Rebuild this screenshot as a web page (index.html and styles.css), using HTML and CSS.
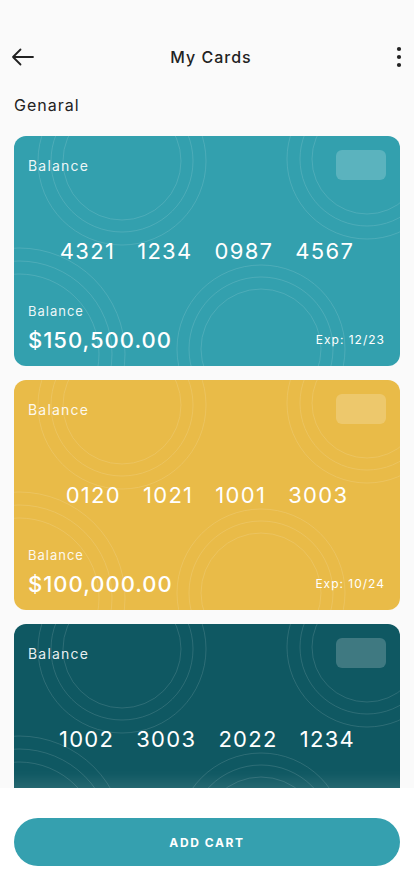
FILE: index.html
```html
<!DOCTYPE html>
<html lang="en">
<head>
  <meta charset="UTF-8" />
  <meta name="viewport" content="width=device-width, initial-scale=1.0"/>
  <title>My Cards</title>
  <link rel="stylesheet" href="styles.css">
</head>
<body>

<!-- Top Bar -->
<div class="topbar">
  <svg class="icon-back" width="24" height="24" viewBox="0 0 24 24">
    <path d="M2 12h20M9.5 4.5L2 12l7.5 7.5" fill="none" stroke="#222" stroke-width="1.8" stroke-linecap="round" stroke-linejoin="round"/>
  </svg>
  <h1>My Cards</h1>
  <svg class="icon-more" width="24" height="24" viewBox="0 0 24 24">
    <circle cx="12" cy="4" r="2.1" fill="#222"/>
    <circle cx="12" cy="12" r="2.1" fill="#222"/>
    <circle cx="12" cy="20" r="2.1" fill="#222"/>
  </svg>
</div>

<div class="section-title">Genaral</div>

<!-- Card List -->
<div class="card-list">

  <div class="card card-teal">
    <svg class="card-bg" viewBox="0 0 386 230" preserveAspectRatio="none">
      <g fill="none" stroke="rgba(255,255,255,0.13)" stroke-width="1">
        <circle cx="108" cy="25" r="59"/><circle cx="108" cy="25" r="71"/><circle cx="108" cy="25" r="84"/>
        <circle cx="353" cy="23" r="55"/><circle cx="353" cy="23" r="67"/><circle cx="353" cy="23" r="80"/>
        <circle cx="247" cy="213" r="60"/><circle cx="247" cy="213" r="72"/><circle cx="247" cy="213" r="84"/>
        <circle cx="5" cy="218" r="80"/><circle cx="5" cy="218" r="93"/><circle cx="5" cy="218" r="106"/>
      </g>
    </svg>
    <div class="card-top">
      <span class="card-label">Balance</span>
      <span class="card-chip"></span>
    </div>
    <div class="card-number">
      <span>4321</span><span>1234</span><span>0987</span><span>4567</span>
    </div>
    <div class="card-bottom">
      <div>
        <div class="card-sublabel">Balance</div>
        <div class="card-amount">$150,500.00</div>
      </div>
      <div class="card-exp">Exp: 12/23</div>
    </div>
  </div>

  <div class="card card-yellow">
    <svg class="card-bg" viewBox="0 0 386 230" preserveAspectRatio="none">
      <g fill="none" stroke="rgba(255,255,255,0.13)" stroke-width="1">
        <circle cx="108" cy="25" r="59"/><circle cx="108" cy="25" r="71"/><circle cx="108" cy="25" r="84"/>
        <circle cx="353" cy="23" r="55"/><circle cx="353" cy="23" r="67"/><circle cx="353" cy="23" r="80"/>
        <circle cx="247" cy="213" r="60"/><circle cx="247" cy="213" r="72"/><circle cx="247" cy="213" r="84"/>
        <circle cx="5" cy="218" r="80"/><circle cx="5" cy="218" r="93"/><circle cx="5" cy="218" r="106"/>
      </g>
    </svg>
    <div class="card-top">
      <span class="card-label">Balance</span>
      <span class="card-chip"></span>
    </div>
    <div class="card-number">
      <span>0120</span><span>1021</span><span>1001</span><span>3003</span>
    </div>
    <div class="card-bottom">
      <div>
        <div class="card-sublabel">Balance</div>
        <div class="card-amount">$100,000.00</div>
      </div>
      <div class="card-exp">Exp: 10/24</div>
    </div>
  </div>

  <div class="card card-dark">
    <svg class="card-bg" viewBox="0 0 386 230" preserveAspectRatio="none">
      <g fill="none" stroke="rgba(255,255,255,0.13)" stroke-width="1">
        <circle cx="108" cy="25" r="59"/><circle cx="108" cy="25" r="71"/><circle cx="108" cy="25" r="84"/>
        <circle cx="353" cy="23" r="55"/><circle cx="353" cy="23" r="67"/><circle cx="353" cy="23" r="80"/>
        <circle cx="247" cy="213" r="60"/><circle cx="247" cy="213" r="72"/><circle cx="247" cy="213" r="84"/>
        <circle cx="5" cy="218" r="80"/><circle cx="5" cy="218" r="93"/><circle cx="5" cy="218" r="106"/>
      </g>
    </svg>
    <div class="card-top">
      <span class="card-label">Balance</span>
      <span class="card-chip"></span>
    </div>
    <div class="card-number">
      <span>1002</span><span>3003</span><span>2022</span><span>1234</span>
    </div>
  </div>

</div>

<!-- Bottom Bar -->
<div class="footer">
  <button class="btn-add">ADD CART</button>
</div>

</body>
</html>
```

FILE: styles.css
```css
* {
  box-sizing: border-box;
  margin: 0;
  padding: 0;
}

body {
  font-family: Inter, "Noto Sans", sans-serif;
  background: #fafafa;
  color: #222;
  height: 896px;
  display: flex;
  flex-direction: column;
  overflow: hidden;
}

.topbar {
  display: grid;
  grid-template-columns: 1fr auto 1fr;
  align-items: center;
  height: 42px;
  margin-top: 36px;
  padding: 0 3px 0 11px;
}

.topbar h1 {
  font-size: 16px;
  font-weight: 500;
  letter-spacing: 1px;
  color: #222;
}

.icon-more {
  justify-self: end;
}

.section-title {
  margin-top: 17px;
  padding: 0 14px;
  font-size: 16px;
  line-height: 20px;
  font-weight: 400;
  letter-spacing: 1px;
  color: #222;
}

.card-list {
  flex: 1;
  overflow: hidden;
  margin-top: 21px;
  padding: 0 14px;
  display: flex;
  flex-direction: column;
  gap: 14px;
}

.card {
  position: relative;
  flex-shrink: 0;
  height: 230px;
  border-radius: 12px;
  overflow: hidden;
  padding: 14px 14px 13px;
  display: flex;
  flex-direction: column;
  color: #fff;
}

.card-teal { background: #33a0ae; }
.card-yellow { background: #e9bb48; }
.card-dark { background: #0f5862; }

.card-bg {
  position: absolute;
  top: 0;
  left: 0;
  width: 100%;
  height: 100%;
}

.card-top,
.card-number,
.card-bottom {
  position: relative;
}

.card-top {
  display: flex;
  justify-content: space-between;
  align-items: center;
  height: 30px;
}

.card-label {
  font-size: 14px;
  letter-spacing: 1.2px;
  color: rgba(255, 255, 255, 0.92);
}

.card-chip {
  width: 50px;
  height: 30px;
  border-radius: 6px;
  background: rgba(255, 255, 255, 0.2);
}

.card-number {
  margin-top: 56px;
  height: 30px;
  display: flex;
  justify-content: center;
  align-items: center;
  gap: 22px;
  font-size: 22px;
  letter-spacing: 1.3px;
}

.card-bottom {
  margin-top: auto;
  display: flex;
  justify-content: space-between;
  align-items: flex-end;
}

.card-sublabel {
  font-size: 13px;
  line-height: 16px;
  letter-spacing: 1px;
  color: rgba(255, 255, 255, 0.92);
  margin-bottom: 8px;
}

.card-amount {
  font-size: 22px;
  line-height: 26px;
  font-weight: 500;
  letter-spacing: 1px;
}

.card-exp {
  font-size: 12px;
  letter-spacing: 1px;
  margin-bottom: 6px;
  margin-right: 1px;
}

.footer {
  flex-shrink: 0;
  height: 108px;
  background: #fff;
  padding: 30px 14px 0;
  box-shadow: 0 -6px 14px rgba(255, 255, 255, 0.12);
  position: relative;
}

.btn-add {
  width: 100%;
  height: 48px;
  border: none;
  border-radius: 24px;
  background: #35a0af;
  color: #fff;
  font-family: Inter, "Noto Sans", sans-serif;
  font-size: 12px;
  font-weight: 700;
  letter-spacing: 1.6px;
  cursor: pointer;
}
```
